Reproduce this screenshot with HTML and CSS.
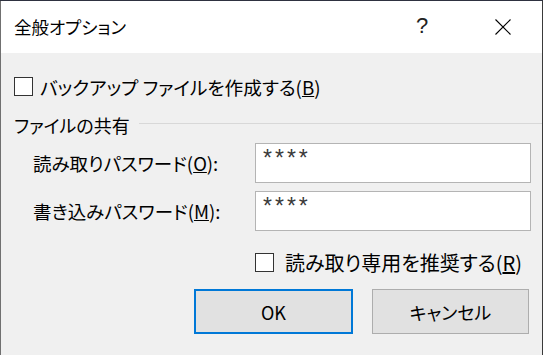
FILE: index.html
```html
<!DOCTYPE html>
<html lang="ja">

<head>
  <meta charset="UTF-8" />
  <meta name="viewport" content="width=device-width, initial-scale=1.0" />
  <title>全般オプション</title>
  <link rel="stylesheet" href="styles.css">
</head>

<body>
  <div class="dialog">
    <div class="titlebar">
      <span class="title">全般オプション</span>
      <button class="tb-btn help">?</button>
      <button class="tb-btn close">
        <svg width="16" height="16" viewBox="0 0 16 16">
          <path d="M0.5 0.5 L15.5 15.5 M15.5 0.5 L0.5 15.5" stroke="#000" stroke-width="1.1" fill="none" />
        </svg>
      </button>
    </div>

    <div class="content">
      <label class="check-row backup">
        <span class="box"></span>
        <span class="check-text">バックアップ ファイルを作成する(<u>B</u>)</span>
      </label>

      <div class="group-row">
        <span class="group-label">ファイルの共有</span>
        <span class="group-line"></span>
      </div>

      <div class="field-row">
        <span class="field-label">読み取りパスワード(<u>O</u>):</span>
        <input class="field-input" type="text" value="****" />
      </div>
      <div class="field-row">
        <span class="field-label">書き込みパスワード(<u>M</u>):</span>
        <input class="field-input" type="text" value="****" />
      </div>

      <label class="check-row readonly">
        <span class="box"></span>
        <span class="check-text">読み取り専用を推奨する(<u>R</u>)</span>
      </label>

      <div class="buttons">
        <button class="btn ok">OK</button>
        <button class="btn cancel">キャンセル</button>
      </div>
    </div>
  </div>
</body>

</html>
```

FILE: styles.css
```css
html,
body {
  margin: 0;
  padding: 0;
}

body {
  font-family: "Noto Sans CJK JP", "Noto Sans", sans-serif;
  font-feature-settings: "palt";
  color: #000;
  background: #2e3140;
}

.dialog {
  width: 541px;
  height: 354px;
  margin-top: 1px;
  background: #f0f0f0;
  border-left: 1px solid #707070;
  border-right: 1px solid #3a3a3a;
  overflow: hidden;
}

.titlebar {
  height: 52px;
  background: #fff;
  display: flex;
  align-items: center;
  padding-left: 13px;
}

.title {
  font-size: 17.5px;
  flex: 1;
  padding-bottom: 1px;
}

.tb-btn {
  background: none;
  border: none;
  padding: 0;
  height: 52px;
  width: 46px;
  display: flex;
  align-items: center;
  justify-content: center;
}

.help {
  font-family: "Liberation Sans", sans-serif;
  font-size: 22px;
  font-weight: normal;
  color: #222;
  margin-right: 35px;
  padding-bottom: 2px;
}

.close {
  margin-right: 16px;
}

.check-row {
  display: flex;
  align-items: center;
  height: 20px;
  font-size: 18px;
}

.box {
  width: 17px;
  height: 17px;
  background: #fff;
  border: 1px solid #333;
  flex-shrink: 0;
}

.backup {
  margin-top: 23px;
  padding-left: 13px;
}

.backup .check-text {
  margin-left: 7px;
  font-size: 18.7px;
}

.group-row {
  display: flex;
  align-items: center;
  height: 20px;
  margin-top: 19px;
  padding-left: 13px;
}

.group-label {
  font-size: 18px;
}

.group-line {
  flex: 1;
  height: 1px;
  background: #d8d8d8;
  margin-left: 9px;
  margin-top: -3px;
}

.field-row {
  display: flex;
  align-items: center;
  height: 40px;
  margin-top: 8px;
  padding-left: 32px;
}

.field-row:first-of-type {
  margin-top: 14px;
}

.field-label {
  font-size: 18.5px;
  width: 222px;
}

.field-input {
  box-sizing: border-box;
  width: 276px;
  height: 40px;
  border: 1px solid #b4b4b4;
  background: #fff;
  padding: 0 0 9px 7px;
  font-family: "Liberation Sans", sans-serif;
  font-size: 23px;
  letter-spacing: 3px;
  color: #3a3a3a;
  outline: none;
}

.readonly {
  margin-top: 21px;
  padding-left: 254px;
}

.readonly .check-text {
  margin-left: 11px;
  font-size: 20px;
}

.buttons {
  display: flex;
  justify-content: flex-end;
  gap: 19px;
  margin-top: 17px;
  padding-right: 13px;
}

.btn {
  box-sizing: border-box;
  height: 45px;
  background: #e1e1e1;
  font-family: "Noto Sans CJK JP", "Noto Sans", sans-serif;
  font-feature-settings: "palt";
  font-size: 18px;
  color: #000;
  padding: 0;
}

.ok {
  width: 159px;
  border: 2px solid #0078d7;
}

.cancel {
  width: 157px;
  border: 1px solid #adadad;
}
```
